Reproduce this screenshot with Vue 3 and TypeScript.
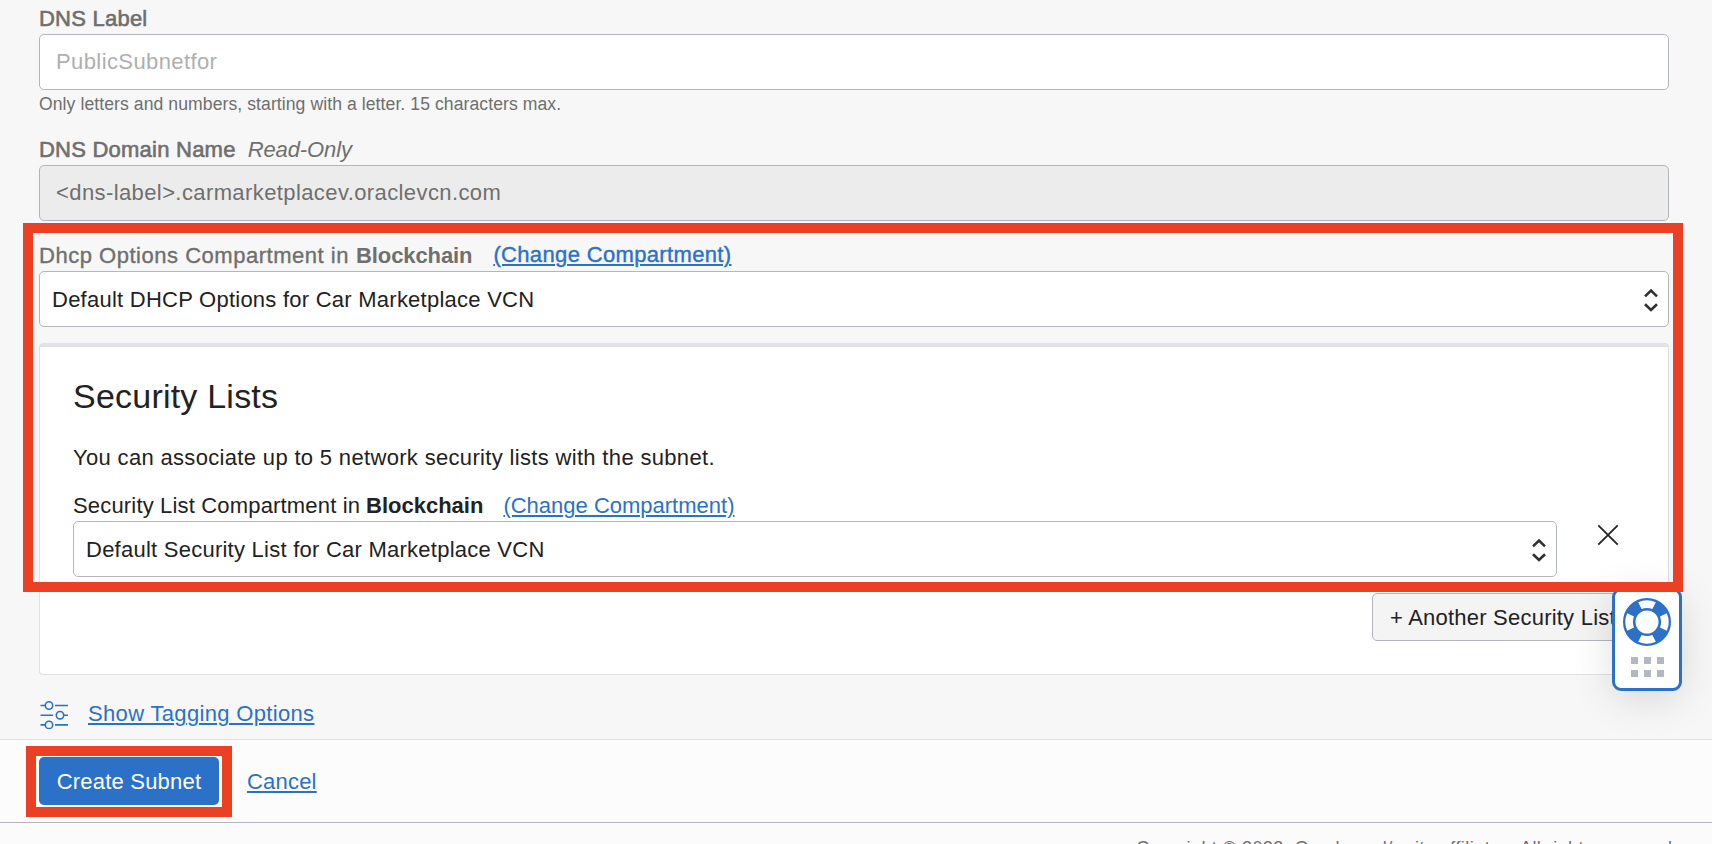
<script setup lang="ts">
interface Choice {
  label: string
  value: string
}

const compartment = 'Blockchain'
const dhcp: Choice = {
  label: 'Dhcp Options Compartment in',
  value: 'Default DHCP Options for Car Marketplace VCN',
}
const security: Choice = {
  label: 'Security List Compartment in',
  value: 'Default Security List for Car Marketplace VCN',
}
</script>

<template>
  <div class="page">
    <main class="form">
      <div class="label"><span class="medium">DNS Label</span></div>
      <div class="field placeholder">PublicSubnetfor</div>
      <p class="hint">Only letters and numbers, starting with a letter. 15 characters max.</p>

      <div class="label domain">
        <span class="medium">DNS Domain Name</span>
        <i class="readonly-note">Read-Only</i>
      </div>
      <div class="field readonly">&lt;dns-label&gt;.carmarketplacev.oraclevcn.com</div>

      <div class="label compartment dhcp">
        <span class="label-text">{{ dhcp.label }}</span>
        <b>{{ compartment }}</b>
        <a class="link">(Change Compartment)</a>
      </div>
      <div class="select">
        <span>{{ dhcp.value }}</span>
        <svg class="chevrons" width="16" height="28" viewBox="0 0 16 28">
          <path d="M2 10.400 8 4.600l6 5.800M2 18.200 8 24l6-5.800" />
        </svg>
      </div>

      <section class="panel">
        <h2>Security Lists</h2>
        <p class="intro">You can associate up to 5 network security lists with the subnet.</p>
        <div class="label compartment security">
          <span class="label-text">{{ security.label }}</span>
          <b>{{ compartment }}</b>
          <a class="link">(Change Compartment)</a>
        </div>
        <div class="list-row">
          <div class="select">
            <span>{{ security.value }}</span>
            <svg class="chevrons" width="16" height="28" viewBox="0 0 16 28">
              <path d="M2 10.400 8 4.600l6 5.800M2 18.200 8 24l6-5.800" />
            </svg>
          </div>
          <svg class="remove" width="22" height="22" viewBox="0 0 22 22">
            <path d="M1.300 1.300 20.700 20.700M20.700 1.300 1.300 20.700" />
          </svg>
        </div>
        <div class="another-row">
          <button class="another">+ Another Security List</button>
        </div>
      </section>

      <div class="tagging">
        <svg width="28" height="28" viewBox="0 0 28 28">
          <path d="M.5 4.500H5M15 4.500h13M.5 14.200H13M23.500 14.200H28M.5 23.900H5M15 23.900h13" />
          <circle cx="9" cy="4.500" r="3.700" />
          <circle cx="20" cy="14.200" r="3.700" />
          <circle cx="9" cy="23.900" r="3.700" />
        </svg>
        <a class="link">Show Tagging Options</a>
      </div>
    </main>

    <div class="actions">
      <button class="create">Create Subnet</button>
      <a class="link">Cancel</a>
    </div>
    <footer class="copyright">Copyright © 2022, Oracle and/or its affiliates. All rights reserved.</footer>

    <aside class="help">
      <svg width="48" height="48" viewBox="0 0 48 48">
        <circle class="rim" cx="24" cy="24" r="17.750" />
        <path
          class="gaps"
          d="M15.200 4.200A21.700 21.700 0 0 1 32.800 4.200L29.400 11A14.100 14.100 0 0 0 18.600 11ZM43.800 15.200A21.700 21.700 0 0 1 43.800 32.800L37 29.400A14.100 14.100 0 0 0 37 18.600ZM32.800 43.800A21.700 21.700 0 0 1 15.200 43.800L18.600 37A14.100 14.100 0 0 0 29.400 37ZM4.200 32.800A21.700 21.700 0 0 1 4.200 15.200L11 18.600A14.100 14.100 0 0 0 11 29.400Z"
        />
      </svg>
      <div class="grip"><i v-for="n in 6" :key="n" /></div>
    </aside>

    <div class="highlight options" />
    <div class="highlight submit" />
  </div>
</template>

<style>
body {
  overflow: hidden;
}
</style>

<style scoped>
.page,
.page * {
  box-sizing: border-box;
}
.page {
  position: relative;
  height: 844px;
  overflow: hidden;
  background: #f7f7f7;
  color: #6f6f6e;
  font: 22px/27px "Liberation Sans", Arial, sans-serif;
  white-space: nowrap;
}
.form {
  height: 739px;
  padding: 0 43px 0 39px;
}
p,
h2 {
  margin: 0;
  font-weight: 400;
}
.label {
  display: flex;
  height: 34px;
  padding-top: 5px;
}
.medium {
  letter-spacing: 0.23px;
  -webkit-text-stroke: 0.6px currentColor;
}
.field {
  height: 56px;
  padding: 13px 16px;
  border: 1px solid #b3b6bd;
  border-radius: 5px;
  background: #fff;
  letter-spacing: 0.4px;
}
.placeholder {
  color: #afafaf;
}
.readonly {
  background: #ececec;
}
.hint {
  margin-top: 2px;
  font-size: 17.6px;
  line-height: 24px;
  letter-spacing: 0.072px;
}
.domain {
  margin-top: 15px;
}
.readonly-note {
  margin-left: 12px;
  letter-spacing: -0.1px;
}
.compartment {
  margin-top: 16px;
}
.compartment b {
  margin-left: 6px;
}
.compartment .link {
  margin-left: 21px;
}
.dhcp .label-text {
  width: 311px;
  letter-spacing: 0.52px;
  -webkit-text-stroke: 0.35px currentColor;
}
.dhcp b {
  letter-spacing: -0.1px;
}
.dhcp .link {
  position: relative;
  top: -1px;
  letter-spacing: 0.35px;
  -webkit-text-stroke: 0.4px currentColor;
}
.select {
  display: flex;
  align-items: center;
  justify-content: space-between;
  height: 56px;
  padding: 1px 9px 0 12px;
  border: 1px solid #b3b6bd;
  border-radius: 5px;
  background: #fff;
  color: #222;
  letter-spacing: 0.245px;
}
.chevrons {
  margin-top: 1px;
  fill: none;
  stroke: #303030;
  stroke-width: 2.6;
}
.link {
  color: #2b71c7;
  text-decoration: underline;
  text-decoration-thickness: 2px;
  text-underline-offset: 2px;
}
.panel {
  height: 332px;
  margin-top: 16px;
  padding: 29px 33px 0;
  border: 1px solid #e0e1e4;
  border-top: 4px solid #e1e3e6;
  border-radius: 4px;
  background: #fff;
  color: #222;
}
h2 {
  font-size: 34px;
  line-height: 40px;
  letter-spacing: 0.22px;
}
.intro {
  margin-top: 28px;
  letter-spacing: 0.33px;
}
.security .label-text {
  width: 287px;
  letter-spacing: 0.17px;
}
.security .link {
  margin-left: 20px;
  letter-spacing: 0;
}
.list-row {
  display: flex;
}
.list-row .select {
  width: 1484px;
}
.remove {
  margin: 3px 0 0 40px;
  fill: none;
  stroke: #222;
  stroke-width: 1.8;
}
.another-row {
  display: flex;
  justify-content: flex-end;
  margin-top: 16px;
}
.another {
  width: 263px;
  height: 48px;
  padding: 0 0 0 17px;
  border: 1px solid #b3b6bd;
  border-radius: 5px;
  background: #f4f4f4;
  color: #222;
  font: inherit;
  letter-spacing: 0.22px;
  text-align: left;
}
.tagging {
  display: flex;
  padding: 25px 0 0 1px;
}
.tagging svg {
  margin-top: 1px;
  fill: none;
  stroke: #2b71c7;
  stroke-width: 1.6;
}
.tagging .link {
  margin-left: 20px;
  letter-spacing: 0.335px;
}
.actions {
  display: flex;
  height: 84px;
  padding: 17px 0 0 39px;
  border-top: 1px solid #e0e1e4;
  border-bottom: 1px solid #b3b6bd;
  background: #fcfcfc;
}
.create {
  width: 180px;
  height: 48px;
  padding: 1px 0 0;
  border: 0;
  border-radius: 5px;
  background: #2b71c7;
  box-shadow: 0 0 0 3px #fff;
  color: #fff;
  font: inherit;
  letter-spacing: 0.2px;
}
.actions .link {
  margin: 11px 0 0 28px;
  height: 27px;
  letter-spacing: 0.2px;
}
.copyright {
  height: 40px;
  padding: 14px 34px 0 0;
  background: #fbfbfb;
  font-size: 18px;
  line-height: 22px;
  letter-spacing: 0.45px;
  text-align: right;
}
.help {
  position: absolute;
  left: 1612px;
  top: 588px;
  display: flex;
  flex-direction: column;
  align-items: center;
  width: 70px;
  height: 103px;
  padding-top: 7px;
  border: 3px solid #2b71c7;
  border-radius: 9px;
  background: #fff;
  box-shadow: 0 8px 40px rgba(0, 0, 0, 0.13);
}
.rim {
  fill: none;
  stroke: #2b71c7;
  stroke-width: 12.5;
}
.gaps {
  fill: #fff;
}
.grip {
  display: grid;
  grid-template-columns: repeat(3, 7px);
  gap: 6px;
  margin-top: 11px;
}
.grip i {
  height: 7px;
  background: #b3b8bf;
}
.highlight {
  position: absolute;
  border: 10px solid #ec4024;
}
.options {
  left: 23px;
  top: 223px;
  width: 1660px;
  height: 369px;
}
.submit {
  left: 26px;
  top: 746px;
  width: 206px;
  height: 71px;
}
</style>
